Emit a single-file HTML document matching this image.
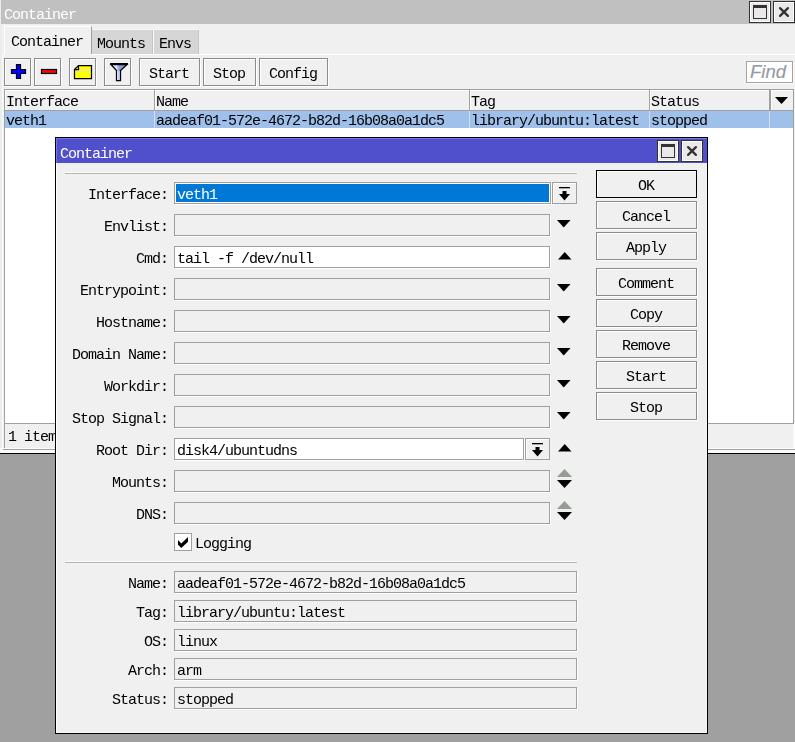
<!DOCTYPE html>
<html><head><meta charset="utf-8"><style>
html,body{margin:0;padding:0;width:795px;height:742px;overflow:hidden;background:#a0a0a0}
body>div{position:absolute}
.t{position:absolute;font-family:"Liberation Mono",monospace;font-size:15px;letter-spacing:-1px;line-height:16px;white-space:pre;will-change:transform}
svg{position:absolute}
</style></head><body>
<div style="left:0px;top:0px;width:795px;height:742px;background:#a0a0a0"></div>
<div style="left:0px;top:0px;width:795px;height:453px;background:#f0f0f0"></div>
<div style="left:0px;top:0px;width:2px;height:453px;background:#ececec"></div>
<div style="left:2px;top:55px;width:1px;height:394px;background:#fafafa"></div>
<div style="left:1px;top:0px;width:794px;height:24px;background:#c0c0c0"></div>
<div class="t" style="left:4px;top:8px;color:#fff;">Container</div>
<div style="left:749px;top:1px;width:22px;height:22px;background:#ebe8ea;border:1px solid #333;box-sizing:border-box;box-shadow:inset 1px 1px #fff, inset -1px -1px #fff"></div>
<div style="left:753px;top:5px;width:14px;height:14px;border:1px solid #333;border-top-width:3px;box-sizing:border-box;background:#ebe8ea"></div>
<div style="left:773px;top:1px;width:22px;height:22px;background:#ebe8ea;border:1px solid #333;box-sizing:border-box;box-shadow:inset 1px 1px #fff, inset -1px -1px #fff"></div>
<svg style="position:absolute;left:773px;top:1px" width="22" height="22" viewBox="0 0 22 22"><path d="M7.1 7.1L14.9 14.9M14.9 7.1L7.1 14.9" stroke="#333" stroke-width="2.3" stroke-linecap="round"/></svg>
<div style="left:92px;top:29px;width:106px;height:1px;background:#f6f6f6"></div>
<div style="left:92px;top:30px;width:61px;height:24px;background:#d6d6d6"></div>
<div style="left:152px;top:30px;width:1px;height:24px;background:#c4c4c4"></div>
<div style="left:153px;top:30px;width:45px;height:24px;background:#d6d6d6"></div>
<div style="left:153px;top:30px;width:1px;height:24px;background:#fafafa"></div>
<div style="left:198px;top:30px;width:1px;height:24px;background:#c4c4c4"></div>
<div style="left:4px;top:26px;width:88px;height:29px;background:#f0f0f0;border-left:1px solid #fff;border-top:1px solid #fff;border-right:1px solid #a0a0a0;box-sizing:border-box"></div>
<div style="left:91px;top:54px;width:704px;height:1px;background:#fff"></div>
<div style="left:2px;top:54px;width:3px;height:1px;background:#fafafa"></div>
<div class="t" style="left:11px;top:35px;color:#000;">Container</div>
<div class="t" style="left:97px;top:37px;color:#000;">Mounts</div>
<div class="t" style="left:159px;top:37px;color:#000;">Envs</div>
<div style="left:4px;top:58px;width:27px;height:28px;background:#f0f0f0;border:1px solid #8c8c8c;box-sizing:border-box;box-shadow:inset 1px 1px #fff, 1px 1px #fff"></div>
<div style="left:34px;top:58px;width:27px;height:28px;background:#f0f0f0;border:1px solid #8c8c8c;box-sizing:border-box;box-shadow:inset 1px 1px #fff, 1px 1px #fff"></div>
<div style="left:69px;top:58px;width:27px;height:28px;background:#f0f0f0;border:1px solid #8c8c8c;box-sizing:border-box;box-shadow:inset 1px 1px #fff, 1px 1px #fff"></div>
<div style="left:104px;top:58px;width:27px;height:28px;background:#f0f0f0;border:1px solid #8c8c8c;box-sizing:border-box;box-shadow:inset 1px 1px #fff, 1px 1px #fff"></div>
<div style="left:139px;top:58px;width:61px;height:28px;background:#f0f0f0;border:1px solid #8c8c8c;box-sizing:border-box;box-shadow:inset 1px 1px #fff, 1px 1px #fff"></div>
<div style="left:203px;top:58px;width:53px;height:28px;background:#f0f0f0;border:1px solid #8c8c8c;box-sizing:border-box;box-shadow:inset 1px 1px #fff, 1px 1px #fff"></div>
<div style="left:259px;top:58px;width:69px;height:28px;background:#f0f0f0;border:1px solid #8c8c8c;box-sizing:border-box;box-shadow:inset 1px 1px #fff, 1px 1px #fff"></div>
<div class="t" style="left:149px;top:67px;color:#000;">Start</div>
<div class="t" style="left:213px;top:67px;color:#000;">Stop</div>
<div class="t" style="left:269px;top:67px;color:#000;">Config</div>
<svg style="position:absolute;left:0;top:0" width="140" height="90"><defs><linearGradient id="fg" x1="0" x2="1" y1="0" y2="0"><stop offset="0" stop-color="#f4f6ff"/><stop offset="0.35" stop-color="#dde4fb"/><stop offset="0.5" stop-color="#8c9cdc"/><stop offset="1" stop-color="#8090d8"/></linearGradient><linearGradient id="sg" x1="0" x2="1"><stop offset="0" stop-color="#dfe8ff"/><stop offset="1" stop-color="#a8b8ee"/></linearGradient></defs><path d="M16.5 64.5h4v5h5v4h-5v5h-4v-5h-5v-4h5z" fill="#0000ff" stroke="#000" stroke-width="1.2"/><rect x="41.5" y="69.5" width="15" height="4" fill="#ff0000" stroke="#000" stroke-width="1.2"/><path d="M74.5 69.5L78.5 65.5H91.5V78.5H74.5Z" fill="#ffff00" stroke="#000" stroke-width="1.25"/><path d="M78.5 65.5V69.5H74.5" fill="none" stroke="#000" stroke-width="1.25"/><path d="M82 68.5h2M85 68.5h3M76 71.5h5M82 71.5h3M87 71.5h3" stroke="#dcdcf0" stroke-width="1"/><path d="M111 64.5H127L120.5 70.5V80.5H116.5V70.5Z" fill="url(#fg)" stroke="#000" stroke-width="1.25"/><rect x="117" y="71" width="3" height="9" fill="url(#sg)"/><rect x="110" y="63" width="18" height="1.6" fill="#000"/></svg>
<div style="left:746px;top:61px;width:47px;height:22px;background:#fff;border:1px solid #a4a4a4;box-sizing:border-box;box-shadow:1px 1px #fafafa"></div>
<div style="position:absolute;left:750px;top:62px;font-family:'Liberation Sans',sans-serif;font-style:italic;font-size:18.5px;line-height:20px;color:#959aa4;-webkit-text-stroke:0.15px #959aa4">Find</div>
<div style="left:4px;top:89px;width:790px;height:335px;background:#fff;border:1px solid #a0a0a0;box-sizing:border-box"></div>
<div style="left:5px;top:90px;width:788px;height:20px;background:#f0f0f0;box-shadow:inset 1px 1px #fff"></div>
<div style="left:5px;top:110px;width:788px;height:1px;background:#a0a0a0"></div>
<div style="left:154px;top:90px;width:1px;height:20px;background:#a0a0a0"></div>
<div style="left:469px;top:90px;width:1px;height:20px;background:#a0a0a0"></div>
<div style="left:649px;top:90px;width:1px;height:20px;background:#a0a0a0"></div>
<div style="left:769px;top:90px;width:1px;height:20px;background:#a0a0a0"></div>
<div style="left:770px;top:90px;width:1px;height:20px;background:#a0a0a0"></div>
<div style="left:155px;top:90px;width:1px;height:20px;background:#fff"></div>
<div style="left:470px;top:90px;width:1px;height:20px;background:#fff"></div>
<div style="left:650px;top:90px;width:1px;height:20px;background:#fff"></div>
<div style="left:771px;top:90px;width:1px;height:20px;background:#fff"></div>
<div style="left:5px;top:111px;width:788px;height:17px;background:#9ec0ea"></div>
<div style="left:154px;top:111px;width:1px;height:17px;background:#d0e0f2"></div>
<div style="left:469px;top:111px;width:1px;height:17px;background:#d0e0f2"></div>
<div style="left:649px;top:111px;width:1px;height:17px;background:#d0e0f2"></div>
<div style="left:769px;top:111px;width:1px;height:17px;background:#d0e0f2"></div>
<div class="t" style="left:6px;top:95px;color:#000;">Interface</div>
<div class="t" style="left:156px;top:95px;color:#000;">Name</div>
<div class="t" style="left:471px;top:95px;color:#000;">Tag</div>
<div class="t" style="left:651px;top:95px;color:#000;">Status</div>
<svg style="position:absolute;left:770px;top:90px" width="24" height="20"><path d="M5 7h13l-6.5 7z" fill="#000"/></svg>
<div class="t" style="left:6px;top:114px;color:#000;">veth1</div>
<div class="t" style="left:156px;top:114px;color:#000;">aadeaf01-572e-4672-b82d-16b08a0a1dc5</div>
<div class="t" style="left:471px;top:114px;color:#000;">library/ubuntu:latest</div>
<div class="t" style="left:651px;top:114px;color:#000;">stopped</div>
<div style="left:4px;top:424px;width:1px;height:24px;background:#a0a0a0"></div>
<div style="left:793px;top:424px;width:2px;height:25px;background:#fafafa"></div>
<div class="t" style="left:8px;top:430px;color:#000;">1 item</div>
<div style="left:0px;top:448px;width:795px;height:5px;background:#fafafa"></div>
<div style="left:3px;top:449px;width:792px;height:1px;background:#a0a0a0"></div>
<div style="left:0px;top:453px;width:795px;height:1px;background:#000"></div>
<div style="left:55px;top:137px;width:653px;height:597px;background:#f0f0f0;border:1px solid #000;box-sizing:border-box"></div>
<div style="left:56px;top:138px;width:651px;height:595px;box-shadow:inset 1px 0 #fff, inset 0 -1px #f8f8f8, inset -1px 0 #f6f6f6"></div>
<div style="left:56px;top:138px;width:651px;height:25px;background:#5050cc;box-shadow:inset 1px 1px #7878e4"></div>
<div class="t" style="left:60px;top:147px;color:#fff;">Container</div>
<div style="left:657px;top:140px;width:22px;height:22px;background:#ebe8ea;border:1px solid #333;box-sizing:border-box;box-shadow:inset 1px 1px #fff, inset -1px -1px #fff"></div>
<div style="left:661px;top:144px;width:14px;height:14px;border:1px solid #333;border-top-width:3px;box-sizing:border-box;background:#ebe8ea"></div>
<div style="left:681px;top:140px;width:22px;height:22px;background:#ebe8ea;border:1px solid #333;box-sizing:border-box;box-shadow:inset 1px 1px #fff, inset -1px -1px #fff"></div>
<svg style="position:absolute;left:681px;top:140px" width="22" height="22" viewBox="0 0 22 22"><path d="M7.1 7.1L14.9 14.9M14.9 7.1L7.1 14.9" stroke="#333" stroke-width="2.3" stroke-linecap="round"/></svg>
<div style="left:65px;top:172px;width:512px;height:1px;background:#fafafa"></div>
<div style="left:65px;top:173px;width:512px;height:1px;background:#b4b4b4"></div>
<div style="left:65px;top:561px;width:512px;height:1px;background:#fafafa"></div>
<div style="left:65px;top:562px;width:512px;height:1px;background:#b4b4b4"></div>
<div class="t" style="left:88px;top:188px;color:#000;">Interface:</div>
<div class="t" style="left:104px;top:220px;color:#000;">Envlist:</div>
<div class="t" style="left:136px;top:252px;color:#000;">Cmd:</div>
<div class="t" style="left:80px;top:284px;color:#000;">Entrypoint:</div>
<div class="t" style="left:96px;top:316px;color:#000;">Hostname:</div>
<div class="t" style="left:72px;top:348px;color:#000;">Domain Name:</div>
<div class="t" style="left:104px;top:380px;color:#000;">Workdir:</div>
<div class="t" style="left:72px;top:412px;color:#000;">Stop Signal:</div>
<div class="t" style="left:96px;top:444px;color:#000;">Root Dir:</div>
<div class="t" style="left:112px;top:476px;color:#000;">Mounts:</div>
<div class="t" style="left:136px;top:508px;color:#000;">DNS:</div>
<div style="left:174px;top:182px;width:377px;height:22px;background:#fff;border:1px solid #a0a0a0;box-sizing:border-box;box-shadow:1px 1px #fff"></div>
<div style="left:176px;top:184px;width:373px;height:18px;background:#0078d7"></div>
<div class="t" style="left:177px;top:188px;color:#fff;">veth1</div>
<div style="left:552px;top:182px;width:25px;height:22px;background:#f0f0f0;border:1px solid #a0a0a0;box-sizing:border-box;box-shadow:inset 1px 1px #fff"></div>
<svg style="position:absolute;left:552px;top:182px" width="26" height="22"><rect x="7" y="5" width="11" height="1.3" fill="#000"/><path d="M10.5 9h4v3h3.5l-5.5 6.5l-5.5-6.5h3.5z" fill="#000"/></svg>
<div style="left:174px;top:214px;width:376px;height:22px;background:#f0f0f0;border:1px solid #a0a0a0;box-sizing:border-box;box-shadow:1px 1px #fff"></div>
<svg style="position:absolute;left:557px;top:220px" width="16" height="9"><path d="M0 0h13.5l-6.75 7.5z" fill="#000"/></svg>
<div style="left:174px;top:246px;width:376px;height:22px;background:#fff;border:1px solid #a0a0a0;box-sizing:border-box;box-shadow:1px 1px #fff"></div>
<div class="t" style="left:177px;top:252px;color:#000;">tail -f /dev/null</div>
<svg style="position:absolute;left:557.5px;top:252px" width="16" height="9"><path d="M0 7.5h13.5l-6.75-7.5z" fill="#000"/></svg>
<div style="left:174px;top:278px;width:376px;height:22px;background:#f0f0f0;border:1px solid #a0a0a0;box-sizing:border-box;box-shadow:1px 1px #fff"></div>
<svg style="position:absolute;left:557px;top:284px" width="16" height="9"><path d="M0 0h13.5l-6.75 7.5z" fill="#000"/></svg>
<div style="left:174px;top:310px;width:376px;height:22px;background:#f0f0f0;border:1px solid #a0a0a0;box-sizing:border-box;box-shadow:1px 1px #fff"></div>
<svg style="position:absolute;left:557px;top:316px" width="16" height="9"><path d="M0 0h13.5l-6.75 7.5z" fill="#000"/></svg>
<div style="left:174px;top:342px;width:376px;height:22px;background:#f0f0f0;border:1px solid #a0a0a0;box-sizing:border-box;box-shadow:1px 1px #fff"></div>
<svg style="position:absolute;left:557px;top:348px" width="16" height="9"><path d="M0 0h13.5l-6.75 7.5z" fill="#000"/></svg>
<div style="left:174px;top:374px;width:376px;height:22px;background:#f0f0f0;border:1px solid #a0a0a0;box-sizing:border-box;box-shadow:1px 1px #fff"></div>
<svg style="position:absolute;left:557px;top:380px" width="16" height="9"><path d="M0 0h13.5l-6.75 7.5z" fill="#000"/></svg>
<div style="left:174px;top:406px;width:376px;height:22px;background:#f0f0f0;border:1px solid #a0a0a0;box-sizing:border-box;box-shadow:1px 1px #fff"></div>
<svg style="position:absolute;left:557px;top:412px" width="16" height="9"><path d="M0 0h13.5l-6.75 7.5z" fill="#000"/></svg>
<div style="left:174px;top:438px;width:350px;height:22px;background:#fff;border:1px solid #a0a0a0;box-sizing:border-box;box-shadow:1px 1px #fff"></div>
<div class="t" style="left:177px;top:444px;color:#000;">disk4/ubuntudns</div>
<div style="left:525px;top:438px;width:25px;height:22px;background:#f0f0f0;border:1px solid #a0a0a0;box-sizing:border-box;box-shadow:inset 1px 1px #fff"></div>
<svg style="position:absolute;left:525px;top:438px" width="26" height="22"><rect x="7" y="5" width="11" height="1.3" fill="#000"/><path d="M10.5 9h4v3h3.5l-5.5 6.5l-5.5-6.5h3.5z" fill="#000"/></svg>
<svg style="position:absolute;left:557.5px;top:444px" width="16" height="9"><path d="M0 7.5h13.5l-6.75-7.5z" fill="#000"/></svg>
<div style="left:174px;top:470px;width:376px;height:22px;background:#f0f0f0;border:1px solid #a0a0a0;box-sizing:border-box;box-shadow:1px 1px #fff"></div>
<svg style="position:absolute;left:557px;top:469px" width="16" height="9"><path d="M0 8h15l-7.5-8z" fill="#949c94"/></svg>
<svg style="position:absolute;left:557px;top:480px" width="16" height="9"><path d="M0 0h15l-7.5 8z" fill="#000"/></svg>
<div style="left:174px;top:502px;width:376px;height:22px;background:#f0f0f0;border:1px solid #a0a0a0;box-sizing:border-box;box-shadow:1px 1px #fff"></div>
<svg style="position:absolute;left:557px;top:501px" width="16" height="9"><path d="M0 8h15l-7.5-8z" fill="#949c94"/></svg>
<svg style="position:absolute;left:557px;top:512px" width="16" height="9"><path d="M0 0h15l-7.5 8z" fill="#000"/></svg>
<div style="left:174px;top:533px;width:18px;height:18px;background:#fff;border:1px solid #a0a0a0;box-sizing:border-box"></div>
<svg style="position:absolute;left:174px;top:533px" width="18" height="18"><path d="M4 7L7.3 10.5L14 3.9V8.8L7.3 15L4 11.8Z" fill="#000"/></svg>
<div class="t" style="left:195px;top:537px;color:#000;">Logging</div>
<div class="t" style="left:128px;top:577px;color:#000;">Name:</div>
<div style="left:174px;top:571px;width:403px;height:22px;background:#f0f0f0;border:1px solid #a0a0a0;box-sizing:border-box;box-shadow:1px 1px #fff"></div>
<div class="t" style="left:177px;top:577px;color:#000;">aadeaf01-572e-4672-b82d-16b08a0a1dc5</div>
<div class="t" style="left:136px;top:606px;color:#000;">Tag:</div>
<div style="left:174px;top:600px;width:403px;height:22px;background:#f0f0f0;border:1px solid #a0a0a0;box-sizing:border-box;box-shadow:1px 1px #fff"></div>
<div class="t" style="left:177px;top:606px;color:#000;">library/ubuntu:latest</div>
<div class="t" style="left:144px;top:635px;color:#000;">OS:</div>
<div style="left:174px;top:629px;width:403px;height:22px;background:#f0f0f0;border:1px solid #a0a0a0;box-sizing:border-box;box-shadow:1px 1px #fff"></div>
<div class="t" style="left:177px;top:635px;color:#000;">linux</div>
<div class="t" style="left:128px;top:664px;color:#000;">Arch:</div>
<div style="left:174px;top:658px;width:403px;height:22px;background:#f0f0f0;border:1px solid #a0a0a0;box-sizing:border-box;box-shadow:1px 1px #fff"></div>
<div class="t" style="left:177px;top:664px;color:#000;">arm</div>
<div class="t" style="left:112px;top:693px;color:#000;">Status:</div>
<div style="left:174px;top:687px;width:403px;height:22px;background:#f0f0f0;border:1px solid #a0a0a0;box-sizing:border-box;box-shadow:1px 1px #fff"></div>
<div class="t" style="left:177px;top:693px;color:#000;">stopped</div>
<div style="left:596px;top:170px;width:101px;height:28px;background:#f0f0f0;border:1px solid #000;box-sizing:border-box;box-shadow:inset 1px 1px #fff"></div>
<div class="t" style="left:638px;top:179px;color:#000;">OK</div>
<div style="left:596px;top:201px;width:101px;height:28px;background:#f0f0f0;border:1px solid #8c8c8c;box-sizing:border-box;box-shadow:inset 1px 1px #fff, 1px 1px #fff"></div>
<div class="t" style="left:622px;top:210px;color:#000;">Cancel</div>
<div style="left:596px;top:232px;width:101px;height:28px;background:#f0f0f0;border:1px solid #8c8c8c;box-sizing:border-box;box-shadow:inset 1px 1px #fff, 1px 1px #fff"></div>
<div class="t" style="left:626px;top:241px;color:#000;">Apply</div>
<div style="left:596px;top:268px;width:101px;height:28px;background:#f0f0f0;border:1px solid #8c8c8c;box-sizing:border-box;box-shadow:inset 1px 1px #fff, 1px 1px #fff"></div>
<div class="t" style="left:618px;top:277px;color:#000;">Comment</div>
<div style="left:596px;top:299px;width:101px;height:28px;background:#f0f0f0;border:1px solid #8c8c8c;box-sizing:border-box;box-shadow:inset 1px 1px #fff, 1px 1px #fff"></div>
<div class="t" style="left:630px;top:308px;color:#000;">Copy</div>
<div style="left:596px;top:330px;width:101px;height:28px;background:#f0f0f0;border:1px solid #8c8c8c;box-sizing:border-box;box-shadow:inset 1px 1px #fff, 1px 1px #fff"></div>
<div class="t" style="left:622px;top:339px;color:#000;">Remove</div>
<div style="left:596px;top:361px;width:101px;height:28px;background:#f0f0f0;border:1px solid #8c8c8c;box-sizing:border-box;box-shadow:inset 1px 1px #fff, 1px 1px #fff"></div>
<div class="t" style="left:626px;top:370px;color:#000;">Start</div>
<div style="left:596px;top:392px;width:101px;height:28px;background:#f0f0f0;border:1px solid #8c8c8c;box-sizing:border-box;box-shadow:inset 1px 1px #fff, 1px 1px #fff"></div>
<div class="t" style="left:630px;top:401px;color:#000;">Stop</div>
</body></html>
